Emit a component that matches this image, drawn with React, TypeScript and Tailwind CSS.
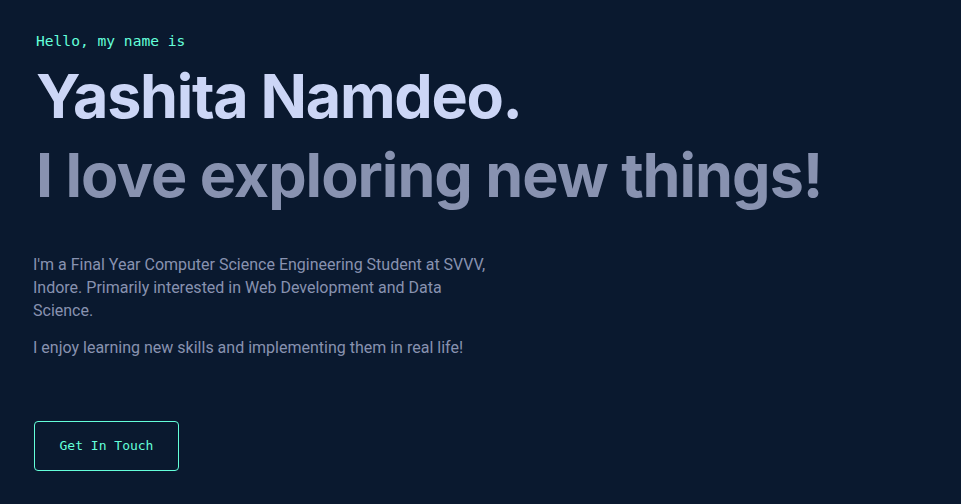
import React from "react";

const App = () => {
  return (
    <div className="min-h-[504px] w-full bg-[#0a192f] overflow-hidden">
      <section className="flex flex-col items-start pl-[36px] pt-[31px]">
        <h1 className="text-[#64ffda] text-[14.6px] leading-[20px] font-['DejaVu_Sans_Mono',monospace]">
          Hello, my name is
        </h1>
        <h2 className="mt-[6px] text-[61px] leading-[79px] font-bold text-[#ccd6f6] tracking-[-1.3px] font-['Inter',sans-serif]">
          Yashita Namdeo.
        </h2>
        <h3 className="text-[61px] leading-[79px] font-bold text-[#8892b0] tracking-[-1px] font-['Inter',sans-serif]">
          I love exploring new things!
        </h3>
        <div className="mt-[38px] -ml-[3px] max-w-[470px] text-[16px] leading-[23px] text-[#8892b0] font-['Roboto',sans-serif]">
          <p>
            I'm a Final Year Computer Science Engineering Student at SVVV,
            Indore. Primarily interested in Web Development and Data Science.
          </p>
          <p className="mt-[14px]">
            I enjoy learning new skills and implementing them in real life!
          </p>
        </div>
        <button className="mt-[62px] -ml-[2px] w-[145px] h-[50px] rounded-[4px] border border-[#64ffda] text-[#64ffda] text-[13px] font-['DejaVu_Sans_Mono',monospace]">
          Get In Touch
        </button>
      </section>
    </div>
  );
};

export default App;
